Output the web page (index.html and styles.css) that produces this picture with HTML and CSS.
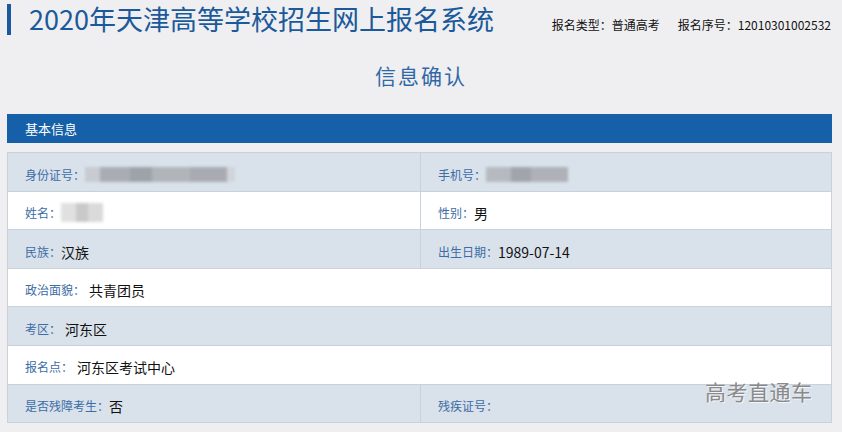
FILE: index.html
```html
<!DOCTYPE html>
<html lang="zh-CN">
<head>
    <meta charset="UTF-8">
    <meta name="viewport" content="width=device-width, initial-scale=1.0">
    <title>2020年天津高等学校招生网上报名系统</title>
    <link rel="stylesheet" href="styles.css">
</head>
<body>
    <div class="top">
        <div class="mark"></div>
        <h1 class="sys-title">2020年天津高等学校招生网上报名系统</h1>
        <div class="info">
            <span>报名类型：普通高考</span>
            <span>报名序号：12010301002532</span>
        </div>
    </div>

    <h2 class="page-title">信息确认</h2>

    <div class="section-bar">基本信息</div>

    <table class="detail">
        <tr class="blue">
            <td class="half"><span class="lbl">身份证号：</span><span class="blur id"></span></td>
            <td><span class="lbl">手机号：</span><span class="blur phone"></span></td>
        </tr>
        <tr>
            <td><span class="lbl">姓名：</span><span class="blur name"></span></td>
            <td><span class="lbl">性别：</span><span class="val">男</span></td>
        </tr>
        <tr class="blue">
            <td><span class="lbl">民族：</span><span class="val">汉族</span></td>
            <td><span class="lbl">出生日期：</span><span class="val">1989-07-14</span></td>
        </tr>
        <tr>
            <td colspan="2"><span class="lbl">政治面貌：</span><span class="val gap">共青团员</span></td>
        </tr>
        <tr class="blue">
            <td colspan="2"><span class="lbl">考区：</span><span class="val gap">河东区</span></td>
        </tr>
        <tr>
            <td colspan="2"><span class="lbl">报名点：</span><span class="val gap">河东区考试中心</span></td>
        </tr>
        <tr class="blue">
            <td><span class="lbl">是否残障考生：</span><span class="val">否</span></td>
            <td><span class="lbl">残疾证号：</span></td>
        </tr>
    </table>

    <div class="watermark">高考直通车</div>
</body>
</html>
```

FILE: styles.css
```css
body{
    margin: 0;
    background: #efeff1;
    font-family: "Noto Sans CJK SC", "Noto Sans", sans-serif;
    position: relative;
    height: 432px;
    overflow: hidden;
}
.top{
    display: flex;
    align-items: center;
    height: 40px;
    padding-left: 7px;
    padding-right: 11px;
}
.mark{
    width: 4px;
    height: 31px;
    background: #1a5a9c;
    margin-top: -1px;
}
.sys-title{
    margin: -2px 0 0 18px;
    font-size: 27px;
    font-weight: normal;
    color: #1b5a9a;
    line-height: 40px;
}
.info{
    margin-left: auto;
    display: flex;
    gap: 18px;
    font-size: 12px;
    color: #111;
    margin-top: 9px;
}
.page-title{
    margin: 18px 0 0 0;
    text-align: center;
    font-size: 21px;
    font-weight: normal;
    letter-spacing: 2px;
    color: #2f68a6;
    line-height: 34px;
}
.section-bar{
    margin: 22px 10px 0 7px;
    height: 29px;
    line-height: 29px;
    background: #1560a8;
    color: #fff;
    font-size: 13px;
    padding-left: 18px;
}
.detail{
    margin: 9px 0 0 7px;
    width: 825px;
    border-collapse: collapse;
}
.detail td{
    height: 37.6px;
    border: 1px solid #c9d1da;
    padding: 0 0 0 17px;
    background: #fff;
    vertical-align: middle;
    white-space: nowrap;
}
.detail .blue td{
    background: #d9e2eb;
}
.detail .half{
    width: 395px;
}
.lbl{
    font-size: 12px;
    color: #3b6ca5;
    vertical-align: middle;
}
.val{
    font-size: 14px;
    color: #111;
    vertical-align: middle;
}
.val.gap{
    margin-left: 4px;
}
.blur{
    display: inline-block;
    height: 15px;
    vertical-align: middle;
    filter: blur(1.5px);
}
.blur.id{
    width: 150px;
    background: linear-gradient(90deg, #c8ccd2 0 10%, #a9adb3 10% 30%, #9ea3a9 30% 45%, #b1b5ba 45% 70%, #a8acb2 70% 95%, #d1d5da 95%);
}
.blur.phone{
    width: 82px;
    background: linear-gradient(90deg, #b6bac0 0 30%, #a1a5ab 30% 55%, #aeb2b8 55%);
}
.blur.name{
    width: 42px;
    height: 19px;
    background: linear-gradient(90deg, #e0e0e0 0 35%, #c9c9c9 35% 65%, #dadada 65%);
}
.watermark{
    position: absolute;
    left: 705px;
    top: 376px;
    font-size: 21px;
    color: #8a8a8a;
    letter-spacing: 0.5px;
    text-shadow: 1px 1px 0 rgba(255,255,255,0.7);
}
```
